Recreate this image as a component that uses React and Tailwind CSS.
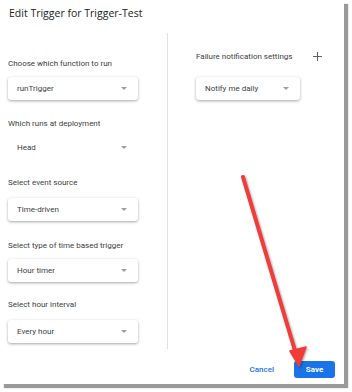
import React from 'react';

function Caret() {
  return (
    <svg width="6" height="3" viewBox="0 0 6 3" className="shrink-0">
      <path d="M0 0 L6 0 L3 3 Z" fill="#9e9e9e" />
    </svg>
  );
}

function Select({ value, width = 'w-[130px]', flat = false, className = '' }) {
  return (
    <div
      className={`${width} h-[23px] flex items-center justify-between pl-[9px] pr-[11px] rounded-[3px] bg-white text-[8px] text-[#3c4043] ${
        flat ? '' : 'shadow-[0_1px_3px_rgba(0,0,0,0.35)]'
      } ${className}`}
    >
      <span>{value}</span>
      <Caret />
    </div>
  );
}

function Label({ children, className = '' }) {
  return <div className={`h-[13px] leading-[13px] text-[8px] text-[#3c4043] ${className}`}>{children}</div>;
}

export default function App() {
  return (
    <div className="w-[352px] h-[392px] bg-white" style={{ fontFamily: 'Roboto, "Liberation Sans", sans-serif' }}>
      <div className="relative w-[344px] h-[384px] bg-white shadow-[4px_4px_1px_#9a9a9a] flex flex-col">
        {/* Title */}
        <div className="pt-[4px] pl-[9px] h-[22px] leading-[18px] text-[10.5px] text-[#202124]" style={{ fontFamily: '"Open Sans", Roboto, sans-serif' }}>
          Edit Trigger for Trigger-Test
        </div>

        {/* Body */}
        <div className="mt-[11px] flex h-[316px]">
          <div className="w-[167px] pl-2 flex flex-col">
            <Label className="mt-[24px]">Choose which function to run</Label>
            <Select value="runTrigger" className="mt-[7px]" />
            <Label className="mt-[17px]">Which runs at deployment</Label>
            <Select value="Head" flat className="mt-[6px]" />
            <Label className="mt-[17px]">Select event source</Label>
            <Select value="Time-driven" className="mt-[9px]" />
            <Label className="mt-[18px]">Select type of time based trigger</Label>
            <Select value="Hour timer" className="mt-[7px]" />
            <Label className="mt-[16px]">Select hour interval</Label>
            <Select value="Every hour" className="mt-[9px]" />
          </div>

          <div className="w-px bg-[#e0e0e0]" />

          <div className="flex-1 pl-[28px] pr-[22px] flex flex-col">
            <div className="mt-[17px] h-[13px] flex items-center justify-between">
              <span className="text-[8px] text-[#3c4043]">Failure notification settings</span>
              <svg width="9" height="9" viewBox="0 0 9 9">
                <path d="M4.5 0 V9 M0 4.5 H9" stroke="#5f6368" strokeWidth="1.1" />
              </svg>
            </div>
            <Select value="Notify me daily" width="w-[104px]" className="mt-[14px]" />
          </div>
        </div>

        {/* Footer */}
        <div className="mt-[12px] flex justify-end items-center pr-[9px] gap-[20px]">
          <span className="text-[8px] font-medium text-[#1a73e8]">Cancel</span>
          <div className="w-[41px] h-[17px] rounded-[3px] bg-[#1a73e8] flex items-center justify-center text-[8px] font-bold text-white">
            Save
          </div>
        </div>

        {/* Red annotation arrow */}
        <svg
          className="absolute left-0 top-0 pointer-events-none drop-shadow-[1.5px_1.5px_1px_rgba(0,0,0,0.35)]"
          width="344"
          height="384"
          viewBox="0 0 344 384"
        >
          <line x1="243" y1="177" x2="296" y2="354" stroke="#f23b3b" strokeWidth="4" strokeLinecap="round" />
          <polygon points="290,351 306,347 299,366" fill="#f23b3b" stroke="#f23b3b" strokeWidth="1.5" strokeLinejoin="round" />
        </svg>
      </div>
    </div>
  );
}
